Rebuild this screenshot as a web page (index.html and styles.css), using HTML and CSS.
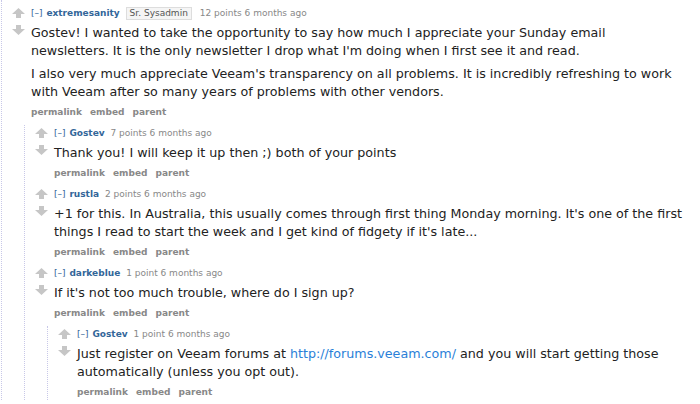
FILE: index.html
```html
<!DOCTYPE html>
<html>
<head>
  <meta charset="UTF-8" />
  <title>comments</title>
  <link rel="stylesheet" href="styles.css">
</head>
<body>
  <div class="comment top">
    <div class="row">
      <div class="midcol">
        <svg class="arrow" width="13" height="10" viewBox="0 0 13 10"><polygon points="6.5,0 13,6 9,6 9,10 4,10 4,6 0,6" /></svg>
        <svg class="arrow" width="13" height="10" viewBox="0 0 13 10"><polygon points="6.5,10 13,4 9,4 9,0 4,0 4,4 0,4" /></svg>
      </div>
      <div class="entry">
        <div class="tagline">
          <a class="expand">[–]</a>
          <a class="author">extremesanity</a>
          <span class="flair">Sr. Sysadmin</span>
          <span class="score">12 points</span> 6 months ago
        </div>
        <div class="md">
          <p>Gostev! I wanted to take the opportunity to say how much I appreciate your Sunday email newsletters. It is the only newsletter I drop what I'm doing when I first see it and read.</p>
          <p>I also very much appreciate Veeam's transparency on all problems. It is incredibly refreshing to work with Veeam after so many years of problems with other vendors.</p>
        </div>
        <ul class="buttons">
          <li>permalink</li>
          <li>embed</li>
          <li>parent</li>
        </ul>
      </div>
    </div>

    <div class="comment">
      <div class="row">
        <div class="midcol">
          <svg class="arrow" width="13" height="10" viewBox="0 0 13 10"><polygon points="6.5,0 13,6 9,6 9,10 4,10 4,6 0,6" /></svg>
          <svg class="arrow" width="13" height="10" viewBox="0 0 13 10"><polygon points="6.5,10 13,4 9,4 9,0 4,0 4,4 0,4" /></svg>
        </div>
        <div class="entry">
          <div class="tagline">
            <a class="expand">[–]</a>
            <a class="author">Gostev</a>
            <span class="score">7 points</span> 6 months ago
          </div>
          <div class="md">
            <p>Thank you! I will keep it up then ;) both of your points</p>
          </div>
          <ul class="buttons">
            <li>permalink</li>
            <li>embed</li>
            <li>parent</li>
          </ul>
        </div>
      </div>

      <div class="row">
        <div class="midcol">
          <svg class="arrow" width="13" height="10" viewBox="0 0 13 10"><polygon points="6.5,0 13,6 9,6 9,10 4,10 4,6 0,6" /></svg>
          <svg class="arrow" width="13" height="10" viewBox="0 0 13 10"><polygon points="6.5,10 13,4 9,4 9,0 4,0 4,4 0,4" /></svg>
        </div>
        <div class="entry">
          <div class="tagline">
            <a class="expand">[–]</a>
            <a class="author">rustla</a>
            <span class="score">2 points</span> 6 months ago
          </div>
          <div class="md">
            <p>+1 for this. In Australia, this usually comes through first thing Monday morning. It's one of the first things I read to start the week and I get kind of fidgety if it's late...</p>
          </div>
          <ul class="buttons">
            <li>permalink</li>
            <li>embed</li>
            <li>parent</li>
          </ul>
        </div>
      </div>

      <div class="row">
        <div class="midcol">
          <svg class="arrow" width="13" height="10" viewBox="0 0 13 10"><polygon points="6.5,0 13,6 9,6 9,10 4,10 4,6 0,6" /></svg>
          <svg class="arrow" width="13" height="10" viewBox="0 0 13 10"><polygon points="6.5,10 13,4 9,4 9,0 4,0 4,4 0,4" /></svg>
        </div>
        <div class="entry">
          <div class="tagline">
            <a class="expand">[–]</a>
            <a class="author">darkeblue</a>
            <span class="score">1 point</span> 6 months ago
          </div>
          <div class="md">
            <p>If it's not too much trouble, where do I sign up?</p>
          </div>
          <ul class="buttons">
            <li>permalink</li>
            <li>embed</li>
            <li>parent</li>
          </ul>
        </div>
      </div>

      <div class="comment">
        <div class="row">
          <div class="midcol">
            <svg class="arrow" width="13" height="10" viewBox="0 0 13 10"><polygon points="6.5,0 13,6 9,6 9,10 4,10 4,6 0,6" /></svg>
            <svg class="arrow" width="13" height="10" viewBox="0 0 13 10"><polygon points="6.5,10 13,4 9,4 9,0 4,0 4,4 0,4" /></svg>
          </div>
          <div class="entry">
            <div class="tagline">
              <a class="expand">[–]</a>
              <a class="author">Gostev</a>
              <span class="score">1 point</span> 6 months ago
            </div>
            <div class="md">
              <p>Just register on Veeam forums at <a href="#">http://forums.veeam.com/</a> and you will start getting those automatically (unless you opt out).</p>
            </div>
            <ul class="buttons">
              <li>permalink</li>
              <li>embed</li>
              <li>parent</li>
            </ul>
          </div>
        </div>
      </div>
    </div>
  </div>
</body>
</html>
```

FILE: styles.css
```css
body {
  margin: 0;
  background: #fff;
  font-family: "DejaVu Sans", Verdana, sans-serif;
  color: #222;
  overflow: hidden;
}

/* дерево комментариев */
.comment {
  border-left: 1px dotted #c8c8e8;
  margin-left: 22px;
}

.comment.top {
  margin-left: 1px;
  padding-top: 5px;
}

.row {
  display: flex;
  padding-left: 10px;
  margin-bottom: 5px;
}

.midcol {
  width: 19px;
  flex-shrink: 0;
  display: flex;
  flex-direction: column;
  gap: 7px;
  padding-top: 3px;
}

.arrow polygon {
  fill: #c6c6c6;
}

.entry {
  flex: 1;
  padding-right: 14px;
}

.tagline {
  font-size: 9px;
  line-height: 16px;
  color: #888;
}

.tagline a {
  color: #369;
}

.author {
  font-weight: bold;
  margin: 0 3px 0 1px;
}

.flair {
  display: inline-block;
  background: #f5f5f5;
  border: 1px solid #ddd;
  color: #545454;
  padding: 0 3px;
  margin-right: 5px;
  line-height: 11px;
}

.md {
  font-size: 12.7px;
  margin: 3px 0 3px;
}

.md p {
  margin: 0 0 5px;
  line-height: 18px;
}

.md p:last-child {
  margin-bottom: 0;
}

.md a {
  color: #2a7fd8;
  text-decoration: none;
}

.buttons {
  list-style: none;
  margin: 0;
  padding: 0;
  display: flex;
  gap: 8px;
  font-size: 9px;
  font-weight: bold;
  line-height: 16px;
  color: #888;
}
```
